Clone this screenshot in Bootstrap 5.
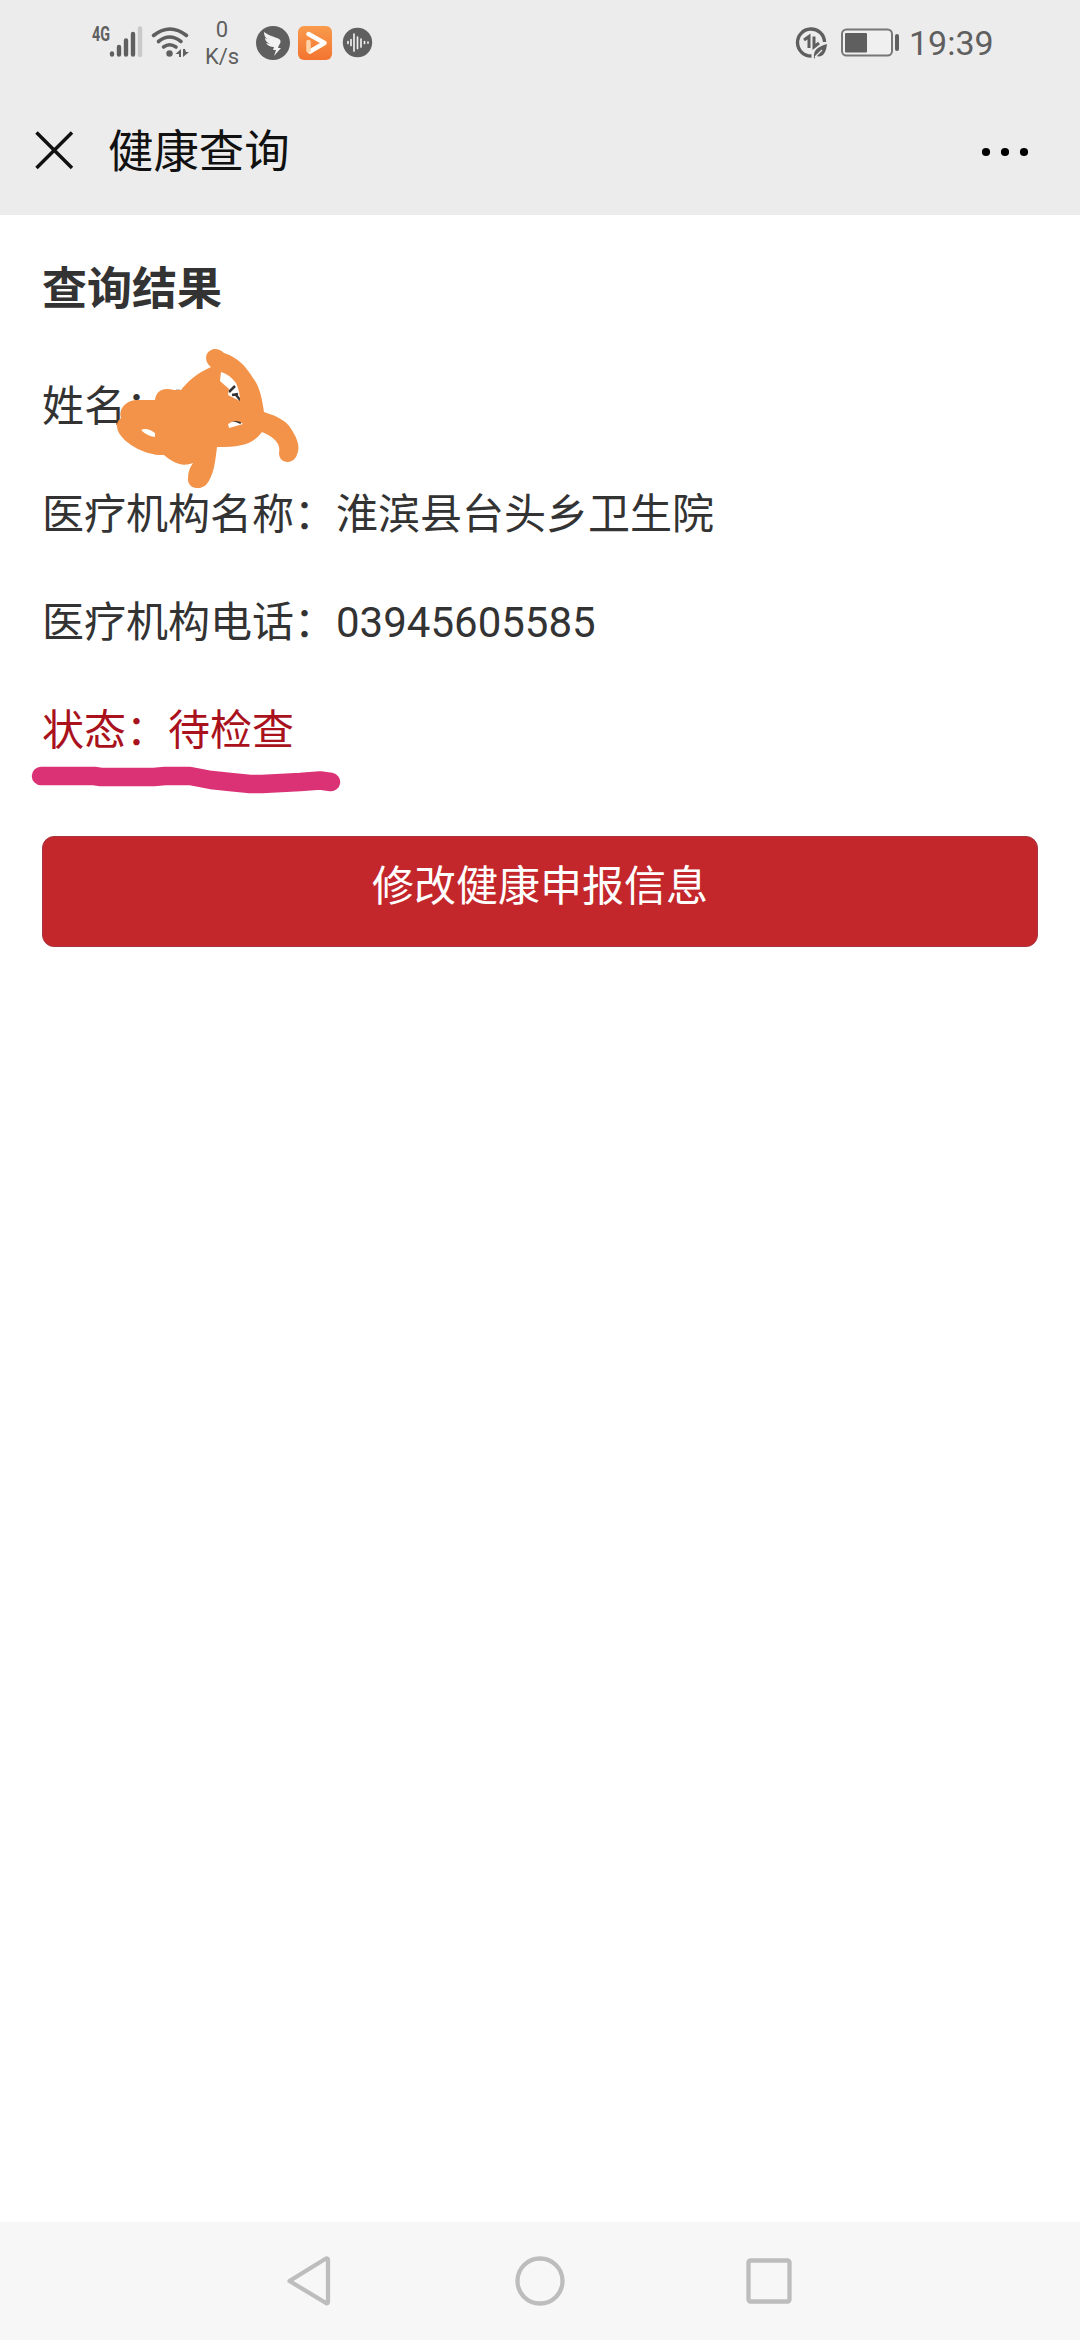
<!DOCTYPE html>
<html lang="zh-CN">
<head>
<meta charset="utf-8">
<meta name="viewport" content="width=device-width, initial-scale=1">
<title>健康查询</title>
<link href="https://cdn.jsdelivr.net/npm/bootstrap@5.3.0/dist/css/bootstrap.min.css" rel="stylesheet">
<style>
body{font-family:Roboto,"Noto Sans CJK SC",sans-serif;background:#fff;color:#333;width:1080px;height:2340px;overflow:hidden}
svg{display:block;flex:none}
.top-area{background:#ececec;height:215px}
.status-bar{height:86px;color:#5f5f5f;padding:0 88px}
.speed{width:46px;font-size:22px;line-height:26.500px;padding-top:1px}
.clock{font-size:34px;line-height:1;margin-left:9px;width:83px}
.title-bar{height:129px;padding:0 50px 0 34px;color:#111}
.page-title{font-size:45.400px;line-height:66px;margin-left:33px;font-weight:400;padding-top:5px}
.content{padding:41px 42px 0}
.result-title{font-size:45px;line-height:68px;font-weight:700;margin:0 0 53px}
.info-row{font-size:42px;line-height:60px;margin-bottom:48px}
.state-row{color:#a9121c;margin-bottom:75px}
.scribble{left:75px;top:-32px}
.underline-mark{left:-12px;top:54px}
.btn-edit{background:#c3272b;color:#fff;font-size:42px;line-height:60px;height:111px;border-radius:12px;border:1px solid #a93540;padding:20px 0 0;display:block}
.system-nav{background:#f7f7f7;height:118px}
</style>
</head>
<body class="d-flex flex-column">
<header class="top-area">
  <div class="status-bar d-flex align-items-center">
    <svg width="60" height="86" viewBox="88 0 60 86">
      <text x="92" y="40.500" font-family="Roboto" font-weight="700" font-size="20" textLength="18" lengthAdjust="spacingAndGlyphs" fill="#5f5f5f">4G</text>
      <g stroke="#5f5f5f" stroke-width="4.400" stroke-linecap="round"><path d="M112 53.500v1M119 47v7.600M126 40.500v14.100M133 34v20.600"/><path d="M140 28.500v26.500" stroke="#c9c9c9"/></g>
    </svg>
    <svg width="51" height="86" viewBox="148 0 51 86">
      <g fill="none" stroke="#5f5f5f" stroke-width="3.600" stroke-linecap="round"><path d="M153.500 35.500q16.500-13 33 0M158.500 41.500q11-9 22.500 0M163.500 47q6-4.500 12.500 0"/></g>
      <circle cx="169.500" cy="53.500" r="3.200" fill="#5f5f5f"/>
      <path d="M175.500 54l5.500-5v8h-2v-3zM183 49h2l1 3h3l-6 5z" fill="#5f5f5f"/>
    </svg>
    <div class="speed text-center">0<br>K/s</div>
    <svg width="147" height="86" viewBox="245 0 147 86">
      <circle cx="273" cy="43" r="17" fill="#5f5f5f"/>
      <path d="M264 32c5 4 12 5 15 7 2 1 2 4 0 6l-1 3h3l-7 8 2-6h-3l1-3c-4 0-7-2-8-4l4 1c-4-2-5-4-5-6l4 2c-4-2-5-5-5-8z" fill="#f2f2f2"/>
      <defs><linearGradient id="orangeGrad" x2="0" y2="1"><stop stop-color="#f99b4c"/><stop offset="1" stop-color="#f37430"/></linearGradient></defs>
      <rect x="298" y="26" width="34" height="34" rx="6" fill="url(#orangeGrad)"/>
      <path d="M308.500 34L324.500 43 310 51.500" fill="none" stroke="#fff" stroke-width="4.500" stroke-linecap="round" stroke-linejoin="round"/>
      <path d="M308.500 42v8.500" stroke="#ffd2a8" stroke-width="4.500" stroke-linecap="round"/>
      <circle cx="357.500" cy="42.500" r="14.700" fill="#5f5f5f"/>
      <path d="M348 41.500v2M351 39.500v6M354 34v17M357.500 37v11.500M361 39v8M364.500 41.500v2M368 42v1" stroke="#eee" stroke-width="1.700" stroke-linecap="round"/>
    </svg>
    <svg class="ms-auto" width="113" height="86" viewBox="787 0 113 86">
      <path d="M811.500 56A13.500 13.500 0 1 1 824.500 42" fill="none" stroke="#5f5f5f" stroke-width="3.400"/>
      <path d="M804 40l5-3.500V48M814 36.500V47l5-4" fill="none" stroke="#5f5f5f" stroke-width="3"/>
      <path d="M827 44c-1 9-4 14-11 12l-2 3c-1-10 4-12 13-15z" fill="#5f5f5f"/><path d="M815 57l7-7" stroke="#ececec" stroke-width="1.300"/>
      <rect x="842" y="29.500" width="50" height="26" rx="4.500" fill="#f0f0f0" stroke="#777" stroke-width="2"/>
      <rect x="845" y="33" width="22" height="19.500" rx="1" fill="#5f5f5f"/>
      <rect x="895" y="34" width="4" height="17" rx="2" fill="#5f5f5f"/>
    </svg>
    <div class="clock">19:39</div>
  </div>
  <div class="title-bar d-flex align-items-center">
    <svg width="41" height="41" viewBox="34 130 41 41"><path d="M36.500 132.500l35.500 35.500M72 132.500L36.500 168" stroke="#111" stroke-width="3.500"/></svg>
    <h1 class="page-title mb-0">健康查询</h1>
    <svg class="ms-auto" width="50" height="12" viewBox="979 145 50 12"><circle cx="985" cy="152" r="4.100"/><circle cx="1004" cy="152" r="4.100"/><circle cx="1023" cy="152" r="4.100"/></svg>
  </div>
</header>
<main class="content flex-grow-1">
  <h2 class="result-title">查询结果</h2>
  <div class="info-row position-relative">姓名：
    <svg class="scribble position-absolute" width="190" height="150" viewBox="117 345 190 150">
      <path d="M229 392l6-6M232 395l6-1M236 395l5 6M227 422q6-4 14 1M176 391h4" fill="none" stroke="#333" stroke-width="2.500"/>
      <path fill="#f3934a" fill-rule="evenodd" d="M211 367C203 361 205 350 215 349Q220 349 224 353C239 358 246 367 253 378C260 387 262 399 264 412C280 417 288 422 293 432C299 442 300 449 296 457C291 465 279 463 279 453Q280 448 278 444Q274 437 262 432C253 444 242 447 217 447C215 463 214 475 206 485C199 491 187 488 188 478Q188 470 193 463C181 468 171 461 164 455C148 456 127 446 119 433Q114 423 121 418C118 410 125 401 136 400H155C156 390 164 387 174 390H181C187 382 197 373 211 367ZM221 372L220 381 229 389 228 395 240 401Q240 392 236 383Q229 374 221 372ZM141 430Q147 427 155 433V437Q147 436 141 430ZM228 424Q237 418 243 424L229 428Z"/>
    </svg>
  </div>
  <div class="info-row">医疗机构名称：淮滨县台头乡卫生院</div>
  <div class="info-row">医疗机构电话：03945605585</div>
  <div class="info-row state-row position-relative">状态：待检查
    <svg class="underline-mark position-absolute" width="312" height="42" viewBox="30 755 312 42">
      <path d="M41 776H94L101 777H154L165 776H190L211 780 230 782 250 784H262L300 782 320 780.500 331 782" fill="none" stroke="#da3275" stroke-width="18.500" stroke-linecap="round" stroke-linejoin="round"/>
    </svg>
  </div>
  <a class="btn btn-edit w-100">修改健康申报信息</a>
</main>
<nav class="system-nav d-flex align-items-center">
  <svg width="1080" height="118" viewBox="0 2222 1080 118" fill="none" stroke="#bdbdbd" stroke-width="4.300" stroke-linejoin="round">
    <path d="M289.500 2281L326 2258.500Q328 2258 328 2260V2301.500Q328 2304 326 2303L289.500 2281Z"/>
    <circle cx="540" cy="2281" r="22.500"/>
    <rect x="748.500" y="2260.500" width="41" height="41" rx="2"/>
  </svg>
</nav>
<script src="https://cdn.jsdelivr.net/npm/bootstrap@5.3.0/dist/js/bootstrap.bundle.min.js"></script>
</body>
</html>
